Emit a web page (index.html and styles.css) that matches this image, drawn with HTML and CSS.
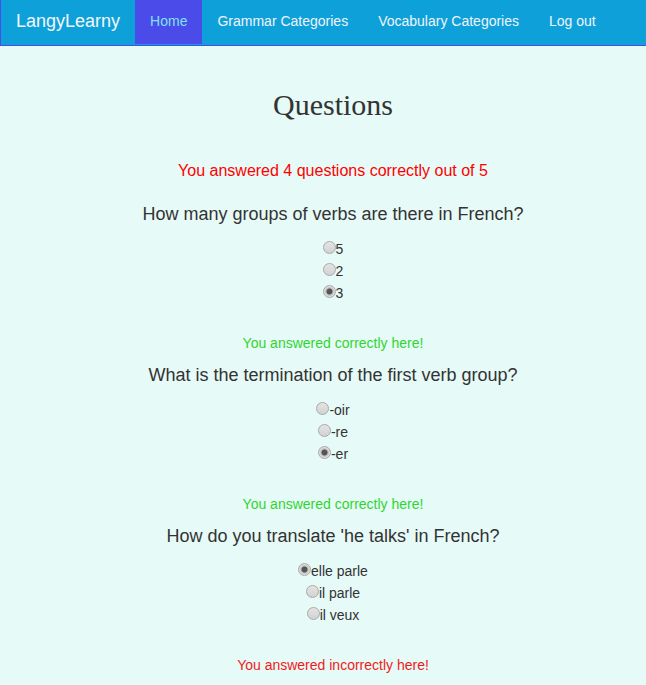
FILE: index.html
```html
<!DOCTYPE html>
<html lang="en">
<head>
<meta charset="utf-8">
<title>LangyLearny - Questions</title>
<link rel="stylesheet" href="styles.css">
</head>
<body>
<nav class="navbar">
  <a class="brand" href="#">LangyLearny</a>
  <ul class="nav">
    <li><a class="nav-link active" href="#">Home</a></li>
    <li><a class="nav-link" href="#">Grammar Categories</a></li>
    <li><a class="nav-link" href="#">Vocabulary Categories</a></li>
    <li><a class="nav-link" href="#">Log out</a></li>
  </ul>
</nav>
<main class="main">
  <h1 class="title">Questions</h1>
  <p class="score">You answered 4 questions correctly out of 5</p>

  <section class="question first">
    <h4 class="q-text">How many groups of verbs are there in French?</h4>
    <div class="options">
      <label class="option"><input class="radio" type="radio" name="q1" disabled>5</label>
      <label class="option"><input class="radio" type="radio" name="q1" disabled>2</label>
      <label class="option"><input class="radio" type="radio" name="q1" checked disabled>3</label>
    </div>
    <p class="feedback correct">You answered correctly here!</p>
  </section>

  <section class="question">
    <h4 class="q-text">What is the termination of the first verb group?</h4>
    <div class="options">
      <label class="option"><input class="radio" type="radio" name="q2" disabled>-oir</label>
      <label class="option"><input class="radio" type="radio" name="q2" disabled>-re</label>
      <label class="option"><input class="radio" type="radio" name="q2" checked disabled>-er</label>
    </div>
    <p class="feedback correct">You answered correctly here!</p>
  </section>

  <section class="question">
    <h4 class="q-text">How do you translate 'he talks' in French?</h4>
    <div class="options">
      <label class="option"><input class="radio" type="radio" name="q3" checked disabled>elle parle</label>
      <label class="option"><input class="radio" type="radio" name="q3" disabled>il parle</label>
      <label class="option"><input class="radio" type="radio" name="q3" disabled>il veux</label>
    </div>
    <p class="feedback incorrect">You answered incorrectly here!</p>
  </section>
</main>
</body>
</html>
```
FILE: styles.css
```css
html, body {
  margin: 0;
  padding: 0;
}
body {
  background: #e6faf7;
  font-family: "Liberation Sans", Arial, sans-serif;
  font-size: 14px;
  color: #333;
}
.navbar {
  display: flex;
  align-items: stretch;
  background: #0ea1d9;
  border-left: 1px solid #4b4bea;
  border-bottom: 1px solid #4b4bea;
  box-sizing: border-box;
  height: 46px;
}
.brand {
  display: block;
  padding: 0 15px 0 15px;
  line-height: 42px;
  font-size: 18px;
  color: #f2f6fa;
  text-decoration: none;
}
.nav {
  display: flex;
  list-style: none;
  margin: 0;
  padding: 0;
}
.nav-link {
  display: block;
  height: 44px;
  padding: 0 15px;
  line-height: 42px;
  font-size: 14px;
  color: #eef4fa;
  text-decoration: none;
}
.nav-link.active {
  background: #4b4bea;
  color: #80e2f2;
}
.main {
  padding-left: 20px;
  text-align: center;
}
.title {
  margin: 42px 0 0;
  font-family: "Liberation Serif", "Times New Roman", serif;
  font-size: 30px;
  line-height: 33px;
  font-weight: normal;
  color: #333;
}
.score {
  margin: 40px 0 0;
  font-size: 16px;
  line-height: 20px;
  color: #ff0000;
}
.question {
  margin-top: 12px;
}
.question.first {
  margin-top: 23px;
}
.q-text {
  margin: 0;
  font-size: 18px;
  line-height: 20px;
  font-weight: normal;
  color: #333;
}
.options {
  margin-top: 14px;
}
.option {
  display: block;
  height: 22px;
  line-height: 22px;
  font-size: 14px;
  color: #333;
}
.radio {
  -webkit-appearance: none;
  appearance: none;
  width: 13px;
  height: 13px;
  margin: 0;
  border: 1px solid #a9a9a9;
  border-radius: 50%;
  background: linear-gradient(#e4e4e4, #d2d2d2);
  vertical-align: 0;
  box-sizing: border-box;
}
.radio:checked {
  background: radial-gradient(circle, #555 0, #555 2.6px, #bdbdbd 3.4px, #dcdcdc 5px);
}
.feedback {
  margin: 29px 0 0;
  font-size: 14px;
  line-height: 20px;
}
.feedback.correct {
  color: #2ed62e;
}
.feedback.incorrect {
  color: #f01a1a;
}
```
